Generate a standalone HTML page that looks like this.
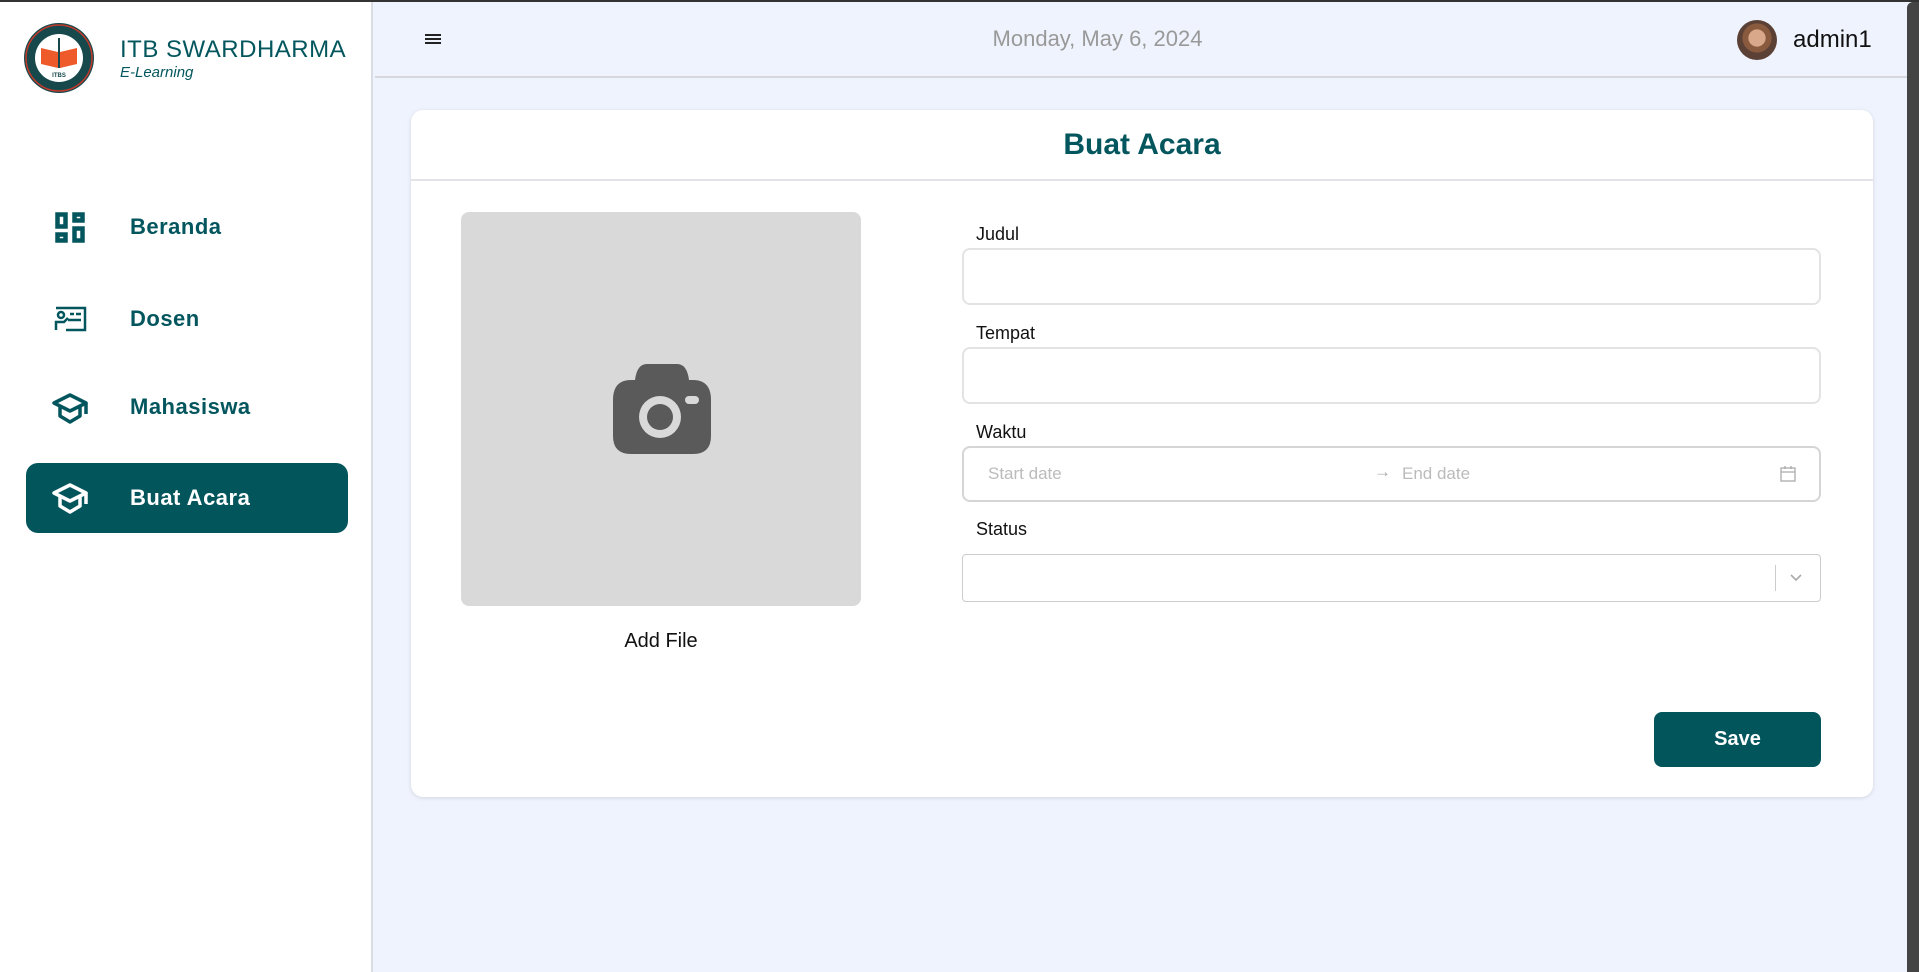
<!DOCTYPE html>
<html><head><meta charset="utf-8"><style>
*{box-sizing:border-box;margin:0;padding:0}
body{width:1919px;height:972px;overflow:hidden;background:#eff3fd;font-family:"Liberation Sans",sans-serif;position:relative}
.topb{position:absolute;left:0;top:0;width:1919px;height:2px;background:#333}
.side{position:absolute;left:0;top:2px;width:373px;height:970px;background:#fff;border-right:2px solid #d9dce3}
.a{position:absolute}
.nav{position:absolute;left:130px;font-size:22px;font-weight:bold;color:#03565d;letter-spacing:.5px}
.hdr{position:absolute;left:375px;top:2px;width:1532px;height:76px;border-bottom:2px solid #d6d8de}
.sb{position:absolute;left:1907px;top:2px;width:12px;height:970px;background:#444;border-radius:6px 0 0 0}
.card{position:absolute;left:411px;top:110px;width:1462px;height:687px;background:#fff;border-radius:12px;box-shadow:0 1px 4px rgba(0,0,0,.12)}
.lbl{position:absolute;left:976px;font-size:18px;color:#111}
.inp{position:absolute;left:962px;width:859px;background:#fff;border:2px solid #e3e3e3;border-radius:8px}
</style></head><body>
<div class="topb"></div>
<div class="side">
 <svg class="a" style="left:23px;top:20px" width="72" height="72" viewBox="0 0 72 72">
  <circle cx="36" cy="36" r="35" fill="#17494c"/><circle cx="36" cy="36" r="33" fill="none" stroke="#c0392b" stroke-width="1.5"/>
  <circle cx="36" cy="36" r="24" fill="#fff"/>
  <path d="M18 26 L35 30 L35 46 L18 42Z M54 26 L37 30 L37 46 L54 42Z" fill="#ef5a2b"/>
  <path d="M36 16 L36 46" stroke="#17494c" stroke-width="2"/>
  <text x="36" y="55" font-size="6" font-weight="bold" fill="#17494c" text-anchor="middle" font-family="Liberation Sans">ITBS</text>
 </svg>
 <div class="a" style="left:120px;top:34px;font-size:24px;color:#03565d;letter-spacing:.5px">ITB SWARDHARMA</div>
 <div class="a" style="left:120px;top:62px;font-size:15px;font-style:italic;color:#03565d">E-Learning</div>

 <svg class="a" style="left:55px;top:210px" width="30" height="31" viewBox="0 0 30 31" fill="none" stroke="#03565d" stroke-width="4.5"><rect x="2.5" y="2.5" width="8" height="12"/><rect x="19.5" y="2.5" width="8" height="6"/><rect x="2.5" y="22.5" width="8" height="6"/><rect x="19.5" y="16.5" width="8" height="12"/></svg>
 <div class="nav" style="top:212px">Beranda</div>
 <svg class="a" style="left:54px;top:304px" width="34" height="26" viewBox="0 0 34 26" fill="none" stroke="#03565d" stroke-width="2.5"><path d="M2 2H31V24H12"/><circle cx="7" cy="9" r="3"/><path d="M2 24V16H10L14 12"/><path d="M16 8H20M22 8H27M14 14H27"/></svg>
 <div class="nav" style="top:304px">Dosen</div>
 <svg class="a" style="left:52px;top:390px" width="36" height="32" viewBox="0 0 36 32" fill="none" stroke="#03565d" stroke-width="3.5" stroke-linejoin="round"><path d="M2 11L18 3L34 11L18 19Z"/><path d="M8 15V24L18 30L28 24V15"/><path d="M34 11V22"/></svg>
 <div class="nav" style="top:392px">Mahasiswa</div>
 <div class="a" style="left:26px;top:461px;width:322px;height:70px;background:#03555c;border-radius:12px"></div>
 <svg class="a" style="left:52px;top:480px" width="36" height="32" viewBox="0 0 36 32" fill="none" stroke="#fff" stroke-width="3.5" stroke-linejoin="round"><path d="M2 11L18 3L34 11L18 19Z"/><path d="M8 15V24L18 30L28 24V15"/><path d="M34 11V22"/></svg>
 <div class="nav" style="top:483px;color:#fff">Buat Acara</div>
</div>
<div class="hdr">
 <div class="a" style="left:50px;top:32px;width:16px;height:2px;background:#222;box-shadow:0 4px 0 #222,0 8px 0 #222"></div>
 <div class="a" style="left:0;width:1445px;text-align:center;top:24px;font-size:22px;color:#999">Monday, May 6, 2024</div>
 <div class="a" style="left:1362px;top:18px;width:40px;height:40px;border-radius:50%;background:radial-gradient(circle at 50% 45%,#d9a88a 0 28%,#8a5a3f 30% 48%,#5a4035 50%)"></div>
 <div class="a" style="left:1418px;top:24px;font-size:24px;color:#111">admin1</div>
</div>
<div class="sb"></div>
<div class="card">
 <div class="a" style="left:0;top:0;width:1462px;height:71px;border-bottom:2px solid #e2e4e8;text-align:center;font-size:30px;font-weight:bold;color:#03565d;padding-top:18px">Buat Acara</div>
 <div class="a" style="left:50px;top:102px;width:400px;height:394px;background:#d9d9d9;border-radius:8px"></div>
 <svg class="a" style="left:200px;top:254px" width="102" height="92" viewBox="0 0 102 92"><path d="M24 16 Q26 0 36 0 H66 Q76 0 78 16 H82 Q100 16 100 36 V72 Q100 90 82 90 H20 Q2 90 2 72 V36 Q2 16 20 16Z" fill="#5a5a5a"/><circle cx="49" cy="53" r="21" fill="#d9d9d9"/><circle cx="49" cy="53" r="13" fill="#5a5a5a"/><rect x="74" y="32" width="14" height="8" rx="4" fill="#d9d9d9"/></svg>
 <div class="a" style="left:50px;width:400px;top:520px;text-align:center;font-size:20px;color:#111">Add File</div>
</div>
<div class="lbl" style="top:224px">Judul</div>
<div class="inp" style="top:248px;height:57px"></div>
<div class="lbl" style="top:323px">Tempat</div>
<div class="inp" style="top:347px;height:57px"></div>
<div class="lbl" style="top:422px">Waktu</div>
<div class="inp" style="top:446px;height:56px;border-color:#d5d5d5">
 <div class="a" style="left:24px;top:16px;font-size:17px;color:#bbb">Start date</div>
 <div class="a" style="left:410px;top:14px;font-size:17px;color:#aaa">→</div>
 <div class="a" style="left:438px;top:16px;font-size:17px;color:#bbb">End date</div>
 <svg class="a" style="left:816px;top:17px" width="16" height="18" viewBox="0 0 16 18" fill="none" stroke="#aaa" stroke-width="1.3"><rect x="1" y="3" width="14" height="13"/><path d="M1 7H15M5 1V4M11 1V4"/></svg>
</div>
<div class="lbl" style="top:519px">Status</div>
<div class="inp" style="top:554px;height:48px;border-width:1px;border-color:#ccc;border-radius:4px">
 <div class="a" style="left:812px;top:10px;width:1px;height:26px;background:#ccc"></div>
 <svg class="a" style="left:826px;top:18px" width="14" height="10" viewBox="0 0 14 10" fill="none" stroke="#aaa" stroke-width="1.6"><path d="M2 2L7 7L12 2"/></svg>
</div>
<div class="a" style="left:1654px;top:712px;width:167px;height:55px;background:#03555c;border-radius:8px;color:#fff;font-size:20px;font-weight:bold;text-align:center;line-height:55px">Save</div>
</body></html>
